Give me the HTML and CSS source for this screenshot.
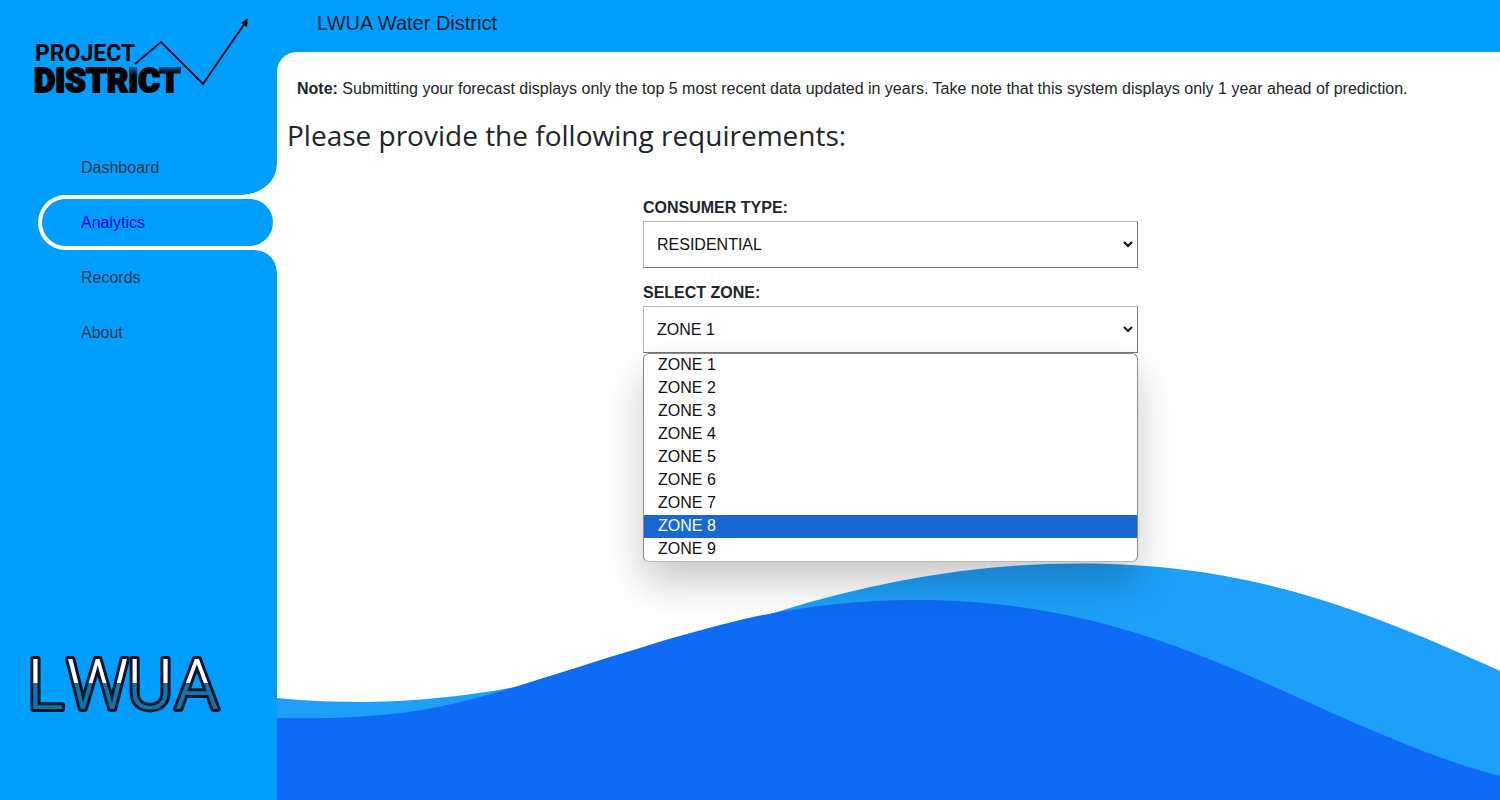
FILE: index.html
```html
<!DOCTYPE html>
<html lang="en">
<head>
<meta charset="utf-8">
<meta name="viewport" content="width=device-width, initial-scale=1">
<title>LWUA Water District</title>
<link rel="stylesheet" href="styles.css">
</head>
<body class="app">
<aside class="sidebar">
  <svg class="brand" viewBox="0 0 220 90" role="img" aria-label="Project District">
    <defs>
      <linearGradient id="fade" x1="0" y1="0" x2="0" y2="1">
        <stop offset="0" stop-color="#0078c8" stop-opacity=".75"/>
        <stop offset="1" stop-color="#0078c8" stop-opacity="0"/>
      </linearGradient>
    </defs>
    <text class="brand-top" x="1" y="45">PROJECT</text>
    <text class="brand-main" x="0" y="76">DISTRICT</text>
    <rect x="96" y="51" width="7" height="9" fill="url(#fade)"/>
    <rect x="125" y="51" width="21" height="6" fill="url(#fade)"/>
    <path class="brand-line" d="M101 48 L127 26 L169 68 L211 7"/>
    <path d="M214 2 L207 7 L213 11 Z"/>
  </svg>
  <nav aria-label="Main">
    <ul class="menu">
      <li class="menu-item"><a class="menu-link" href="#">Dashboard</a></li>
      <li class="menu-item menu-item-active"><a class="menu-link" href="#" aria-current="page">Analytics</a></li>
      <li class="menu-item"><a class="menu-link" href="#">Records</a></li>
      <li class="menu-item"><a class="menu-link" href="#">About</a></li>
    </ul>
  </nav>
  <svg class="emblem" viewBox="0 -16 220 100" role="img" aria-label="LWUA">
    <defs>
      <linearGradient id="water" gradientUnits="userSpaceOnUse" x1="0" y1="0" x2="0" y2="68">
        <stop offset=".52" stop-color="#fff"/>
        <stop offset=".52" stop-color="#0e76a8"/>
      </linearGradient>
    </defs>
    <text class="emblem-text" x="1 40 101 149" y="61">LWUA</text>
  </svg>
</aside>
<header class="topbar">LWUA Water District</header>
<main class="content">
  <svg class="waves" viewBox="0 0 1223 237" preserveAspectRatio="none" aria-hidden="true">
    <path fill="#1ea0f8" d="M0 135 C30 138 60 139 90 139 C140 138 190 133 238 124 L503 48 C600 18 700 .5 801 .5 C960 .5 1070 38 1223 108 V237 H0 Z"/>
    <path fill="#0d6bf6" d="M0 155 C40 156 90 155 139 148 C175 142 205 134 238 124 C280 111 322 97 363 85 C397 74 430 65 463 57 C515 45 575 37 640 37 C780 37 880 74 959 107 C1040 142 1140 192 1223 213 V237 H0 Z"/>
  </svg>
  <p class="note"><strong>Note:</strong> Submitting your forecast displays only the top 5 most recent data updated in years. Take note that this system displays only 1 year ahead of prediction.</p>
  <h1 class="title">Please provide the following requirements:</h1>
  <form class="form">
    <div class="field">
      <label class="label" for="type">CONSUMER TYPE:</label>
      <div class="control">
        <select class="select" id="type"><option>RESIDENTIAL</option></select>
        <svg class="chevron" viewBox="0 0 10 7" aria-hidden="true"><path d="M1 1 L5 5 L9 1"/></svg>
      </div>
    </div>
    <div class="field">
      <label class="label" for="zone">SELECT ZONE:</label>
      <div class="control">
        <select class="select" id="zone"><option>ZONE 1</option></select>
        <svg class="chevron" viewBox="0 0 10 7" aria-hidden="true"><path d="M1 1 L5 5 L9 1"/></svg>
        <ul class="options" role="listbox" aria-label="Zones">
          <li class="option" role="option">ZONE 1</li>
          <li class="option" role="option">ZONE 2</li>
          <li class="option" role="option">ZONE 3</li>
          <li class="option" role="option">ZONE 4</li>
          <li class="option" role="option">ZONE 5</li>
          <li class="option" role="option">ZONE 6</li>
          <li class="option" role="option">ZONE 7</li>
          <li class="option option-active" role="option" aria-selected="true">ZONE 8</li>
          <li class="option" role="option">ZONE 9</li>
        </ul>
      </div>
    </div>
  </form>
</main>
</body>
</html>
```
FILE: styles.css
```css
* { box-sizing: border-box; }

.app {
  margin: 0;
  min-height: 100vh;
  display: grid;
  grid-template: auto 1fr / 277px 1fr;
  background: #009eff;
  color: #212529;
  font: 16px/24px "Liberation Sans", Arial, sans-serif;
}

.sidebar {
  grid-row: 1 / 3;
  display: flex;
  flex-direction: column;
  padding: 16px 0 68px;
}

.brand { width: 220px; height: 90px; margin-left: 34px; }
.brand-top { font: 700 23px Roboto, sans-serif; }
.brand-main { font: 900 33px Roboto, sans-serif; stroke: #000; stroke-width: 2px; }
.brand-line { fill: none; stroke: #000b1e; stroke-width: 2; }

.menu { list-style: none; margin: 34px 0 0; padding: 0 0 0 38px; }
.menu-item { position: relative; padding: 4px; }
.menu-link {
  display: block;
  padding: 12px 39px;
  line-height: 23px;
  color: #263746;
  text-decoration: none;
}
.menu-item-active { background: #fff; border-radius: 28px 0 0 28px; }
.menu-item-active .menu-link { background: #009eff; border-radius: 24px; color: #0000c8; }
.menu-item-active::before,
.menu-item-active::after { content: ""; position: absolute; right: 0; }
.menu-item-active::before {
  bottom: 100%;
  width: 36px;
  height: 30px;
  background: radial-gradient(36px 30px at 0 0, transparent 98%, #fff);
}
.menu-item-active::after {
  top: 100%;
  width: 22px;
  height: 22px;
  background: radial-gradient(22px 22px at 0 100%, transparent 97%, #fff);
}

.emblem { width: 220px; height: 100px; margin: auto 0 0 26px; }
.emblem-text {
  font: 300 70px Roboto, sans-serif;
  fill: url(#water);
  stroke: #00142a;
  stroke-width: 6px;
  stroke-linejoin: round;
  paint-order: stroke;
}

.topbar { padding: 10px 40px 15px; font-size: 20px; line-height: 27px; color: #0b1a2c; }

.content {
  position: relative;
  padding: 24px 6px 24px 10px;
  background: #fff;
  border-top-left-radius: 20px;
}
.waves { position: absolute; left: 0; bottom: 0; width: 100%; height: 237px; }

.note { margin: 0 10px 14px; line-height: 26px; }
.title { margin: 0; font: 400 28px/38px "Open Sans", sans-serif; }

.form {
  position: relative;
  width: 495px;
  max-width: 100%;
  margin: 41px auto 0;
  display: grid;
  gap: 12px;
}
.label { display: block; font-weight: 700; line-height: 26px; }
.control { position: relative; }
.select {
  display: block;
  width: 100%;
  height: 47px;
  padding: 0 13px;
  appearance: none;
  border: 1px solid #767676;
  border-top-color: #b5b5b5;
  border-left-color: #b5b5b5;
  border-radius: 0;
  background: #fff;
  color: #111;
  font: inherit;
}
.chevron { position: absolute; right: 5px; top: 20px; width: 10px; height: 7px; }
.chevron path { fill: none; stroke: #111; stroke-width: 2; }
.options {
  position: absolute;
  top: 100%;
  left: 0;
  right: 0;
  margin: 0;
  padding: 0;
  list-style: none;
  overflow: hidden;
  background: #fff;
  border: 1px solid #8a8a8a;
  border-bottom-color: #b5b5b5;
  border-radius: 6px;
  box-shadow: 0 20px 40px rgba(0, 0, 0, .22);
  color: #111;
}
.option { padding: 0 14px 2px; line-height: 21px; }
.option-active { background: #1967d2; color: #fff; }
```
